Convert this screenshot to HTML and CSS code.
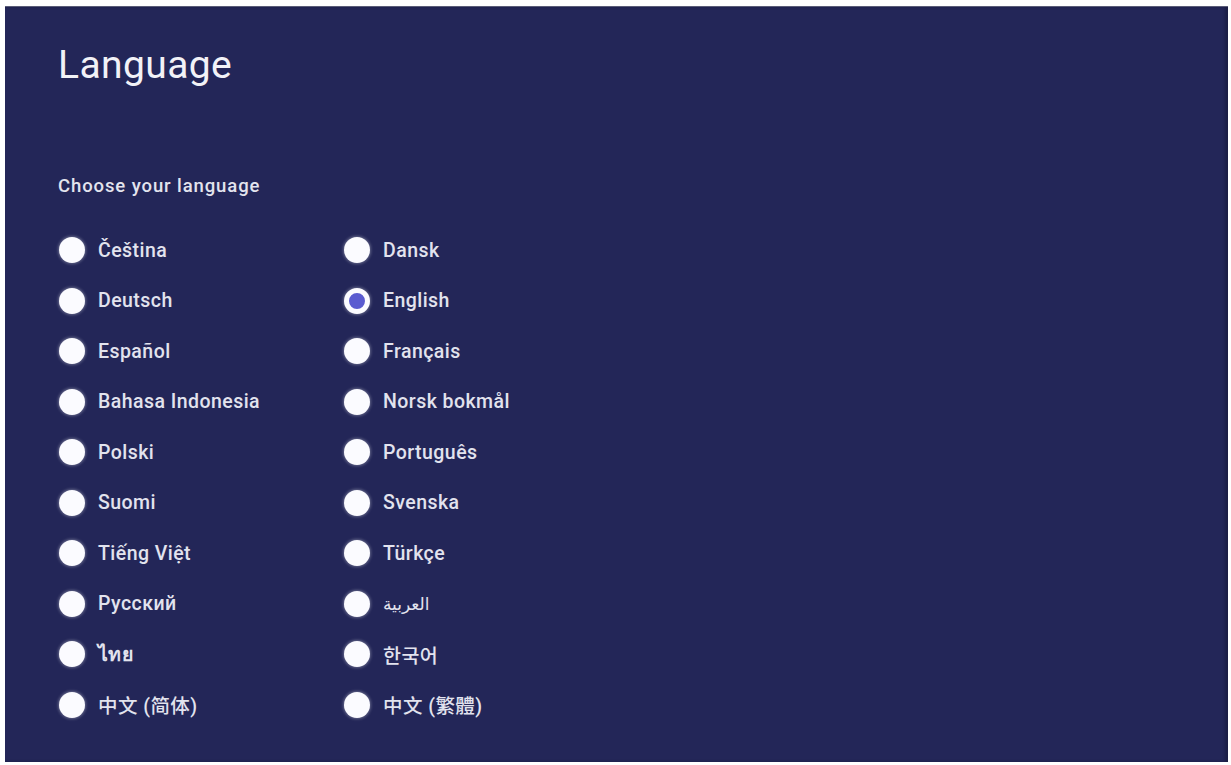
FILE: index.html
```html
<!DOCTYPE html>
<html lang="en">
<head>
<meta charset="utf-8">
<title>Language</title>
<link rel="stylesheet" href="styles.css">
</head>
<body>
<main class="panel">
  <h1 class="title">Language</h1>
  <p class="subtitle">Choose your language</p>
  <ul class="lang-grid">
    <li class="option"><span class="radio"></span><span class="label">Čeština</span></li>
    <li class="option"><span class="radio"></span><span class="label">Dansk</span></li>
    <li class="option"><span class="radio"></span><span class="label">Deutsch</span></li>
    <li class="option"><span class="radio checked"></span><span class="label">English</span></li>
    <li class="option"><span class="radio"></span><span class="label">Español</span></li>
    <li class="option"><span class="radio"></span><span class="label">Français</span></li>
    <li class="option"><span class="radio"></span><span class="label">Bahasa Indonesia</span></li>
    <li class="option"><span class="radio"></span><span class="label">Norsk bokmål</span></li>
    <li class="option"><span class="radio"></span><span class="label">Polski</span></li>
    <li class="option"><span class="radio"></span><span class="label">Português</span></li>
    <li class="option"><span class="radio"></span><span class="label">Suomi</span></li>
    <li class="option"><span class="radio"></span><span class="label">Svenska</span></li>
    <li class="option"><span class="radio"></span><span class="label">Tiếng Việt</span></li>
    <li class="option"><span class="radio"></span><span class="label">Türkçe</span></li>
    <li class="option"><span class="radio"></span><span class="label">Русский</span></li>
    <li class="option"><span class="radio"></span><span class="label label-ar" lang="ar">العربية</span></li>
    <li class="option"><span class="radio"></span><span class="label label-th" lang="th">ไทย</span></li>
    <li class="option"><span class="radio"></span><span class="label label-ko" lang="ko">한국어</span></li>
    <li class="option"><span class="radio"></span><span class="label label-sc" lang="zh-Hans">中文 (简体)</span></li>
    <li class="option"><span class="radio"></span><span class="label label-tc" lang="zh-Hant">中文 (繁體)</span></li>
  </ul>
</main>
</body>
</html>
```

FILE: styles.css
```css
* {
  box-sizing: border-box;
}

html, body {
  margin: 0;
  padding: 0;
  background: #ffffff;
}

body {
  font-family: Roboto, "Noto Sans", "DejaVu Sans", "Noto Sans CJK SC", sans-serif;
  color: #e4e5f0;
}

.panel {
  margin: 6px 3px 0 5px;
  height: 756px;
  padding: 35px 53px 0 53px;
  background: #232658;
  border-top: 1px solid #5a5c78;
  box-shadow: inset -3px 0 3px rgba(20, 22, 50, 0.5);
}

.title {
  margin: 0;
  font-size: 39px;
  line-height: 46px;
  font-weight: 400;
  color: #f2f2f7;
  letter-spacing: 0.4px;
}

.subtitle {
  margin: 86px 0 0 0;
  font-size: 18.5px;
  line-height: 24px;
  font-weight: 500;
  letter-spacing: 0.9px;
  color: #e3e4ee;
}

.lang-grid {
  list-style: none;
  margin: 27px 0 0 1px;
  padding: 0;
  display: grid;
  grid-template-columns: 285px 285px;
  grid-auto-rows: 50.5px;
}

.option {
  display: flex;
  align-items: center;
  gap: 13px;
}

.radio {
  flex: none;
  width: 26px;
  height: 26px;
  border-radius: 50%;
  background: #fbfbff;
  box-shadow: 0 0 3px 1px rgba(255, 255, 255, 0.3);
}

.radio.checked {
  background: #5a5bd0;
  border: 5px solid #fbfbff;
}

.label {
  font-size: 19.5px;
  font-weight: 500;
  letter-spacing: 0.45px;
  color: #e2e3ee;
}

.label-ar {
  font-family: "DejaVu Sans", "Noto Sans", sans-serif;
  font-size: 17px;
  font-weight: 400;
  letter-spacing: 0;
}

.label-th {
  font-weight: 700;
}

.label-ko {
  font-family: "Noto Sans CJK KR", sans-serif;
  font-weight: 500;
}

.label-sc {
  font-family: Roboto, "Noto Sans CJK SC", sans-serif;
}

.label-tc {
  font-family: Roboto, "Noto Sans CJK TC", sans-serif;
}
```
